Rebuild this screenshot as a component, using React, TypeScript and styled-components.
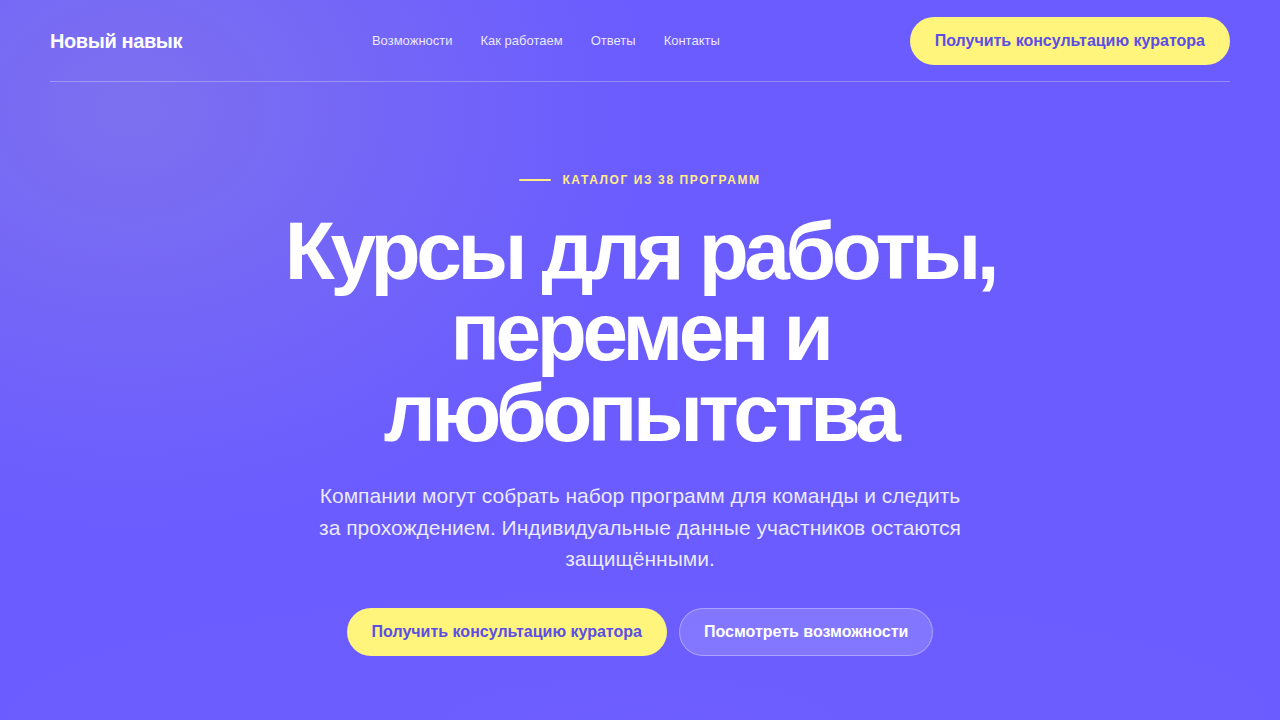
import React from "react";
import styled, { createGlobalStyle } from "styled-components";

const Global = createGlobalStyle`
  * { box-sizing: border-box; }
  html, body { margin: 0; padding: 0; }
  body {
    font-family: "Liberation Sans", Arial, sans-serif;
    background: #6a5cff;
  }
`;

const Page = styled.div`
  min-height: 720px;
  background:
    radial-gradient(ellipse 520px 420px at 130px 110px, rgba(160, 150, 210, 0.35), rgba(160, 150, 210, 0) 100%),
    radial-gradient(ellipse 700px 140px at 640px 720px, rgba(120, 100, 255, 0.25), rgba(120, 100, 255, 0) 100%),
    #6a5cff;
  padding: 0 50px;
  color: #fff;
`;

const Header = styled.header`
  display: flex;
  align-items: center;
  justify-content: space-between;
  height: 82px;
  padding-top: 1px;
  border-bottom: 1px solid rgba(255, 255, 255, 0.28);
`;

const Logo = styled.div`
  font-size: 20px;
  font-weight: 700;
  letter-spacing: -0.4px;
  color: #fff;
`;

const Nav = styled.nav`
  display: flex;
  gap: 28px;
  margin-top: -1px;
`;

const NavLink = styled.a`
  font-size: 13px;
  color: rgba(255, 255, 255, 0.88);
  text-decoration: none;
`;

const Button = styled.button<{ $variant?: "primary" | "ghost" }>`
  height: 48px;
  padding: 0 24px;
  border-radius: 999px;
  font-family: inherit;
  font-size: 16px;
  font-weight: 700;
  cursor: pointer;
  border: 1px solid
    ${(p) => (p.$variant === "ghost" ? "rgba(255,255,255,0.32)" : "transparent")};
  background: ${(p) => (p.$variant === "ghost" ? "rgba(255,255,255,0.16)" : "#fff47c")};
  color: ${(p) => (p.$variant === "ghost" ? "#ffffff" : "#5b4ee6")};
`;

const Hero = styled.section`
  display: flex;
  flex-direction: column;
  align-items: center;
  text-align: center;
  padding-top: 90px;
`;

const Eyebrow = styled.div`
  display: flex;
  align-items: center;
  gap: 11px;
  font-size: 12px;
  font-weight: 700;
  letter-spacing: 1.6px;
  color: #ffec85;
  text-transform: uppercase;
  line-height: 16px;
`;

const EyebrowLine = styled.span`
  width: 32px;
  height: 2px;
  background: #ffec85;
  border-radius: 1px;
`;

const Title = styled.h1`
  margin: 22px 0 0;
  font-size: 82px;
  line-height: 81px;
  font-weight: 700;
  letter-spacing: -4.4px;
  color: #fff;
  max-width: 760px;
`;

const Lead = styled.p`
  margin: 27px 0 0;
  font-size: 21px;
  line-height: 31.5px;
  color: rgba(255, 255, 255, 0.88);
  max-width: 660px;
`;

const Actions = styled.div`
  display: flex;
  gap: 12px;
  margin-top: 33px;
`;

export default function App() {
  return (
    <>
      <Global />
      <Page>
        <Header>
          <Logo>Новый навык</Logo>
          <Nav>
            <NavLink href="#">Возможности</NavLink>
            <NavLink href="#">Как работаем</NavLink>
            <NavLink href="#">Ответы</NavLink>
            <NavLink href="#">Контакты</NavLink>
          </Nav>
          <Button>Получить консультацию куратора</Button>
        </Header>
        <Hero>
          <Eyebrow>
            <EyebrowLine />
            Каталог из 38 программ
          </Eyebrow>
          <Title>
            Курсы для работы,
            <br />
            перемен и
            <br />
            любопытства
          </Title>
          <Lead>
            Компании могут собрать набор программ для команды и следить за прохождением.
            Индивидуальные данные участников остаются защищёнными.
          </Lead>
          <Actions>
            <Button>Получить консультацию куратора</Button>
            <Button $variant="ghost">Посмотреть возможности</Button>
          </Actions>
        </Hero>
      </Page>
    </>
  );
}
